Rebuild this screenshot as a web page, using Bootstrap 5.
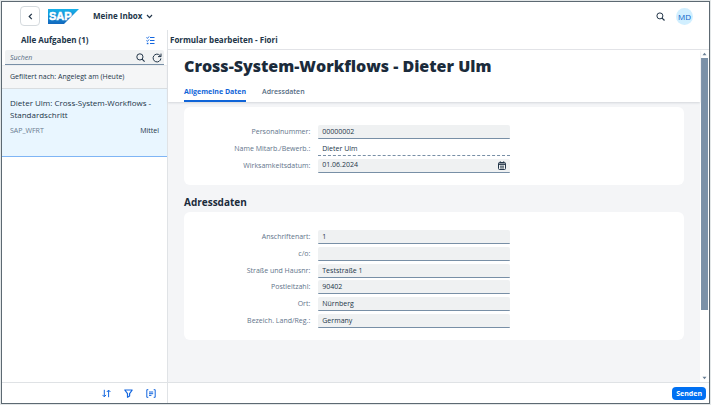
<!DOCTYPE html>
<html lang="de">
<head>
<meta charset="utf-8">
<meta name="viewport" content="width=device-width, initial-scale=1">
<title>Meine Inbox</title>
<link href="https://cdn.jsdelivr.net/npm/bootstrap@5.3.0/dist/css/bootstrap.min.css" rel="stylesheet">
<style>
body{font-family:"Open Sans","Noto Sans",sans-serif;font-size:7px;line-height:12px;color:#223548;background:#e3e7e8;padding:1px}
.app-frame{border:1px solid #5d6972;background:#fff}
.shell-bar{height:28px;padding:0 16px 0 18px}
.back-btn{width:20px;height:20px;border:1px solid #d5dade;border-radius:4px;background:#fff}
.icon-btn{border:0;background:none;padding:0;display:flex;color:#223548}
.icon-btn.blue{color:#1467df}
.shell-title{font-size:8px;font-weight:700;margin-left:14px}
.icon-btn.user-badge{width:17px;height:17px;background:#d1efff;color:#0f5fc9;font-size:8px;line-height:17px;margin-left:11px}
.master{width:166px;border-right:1px solid #e0e3e6}
.pane-title{font-size:8px;font-weight:700;line-height:19px;height:20px;margin:0}
.list-title{padding-left:19px}
.search-field{height:15px;margin:0 3px;background:#f0f2f3;border-bottom:1px solid #788fa6;border-radius:2px 2px 0 0;padding:1px 2px 0 5px;gap:7px}
.search-field input{background:none;border:0;padding:0;outline:0;min-width:0;font-style:italic;color:#556b82}
.search-field input::placeholder{color:#556b82;opacity:1}
.filter-info{height:24px;line-height:22px;padding-left:8px;background:#f5f6f7;border-top:1px solid #eceef0;border-bottom:1px solid #d9dde0}
.task-item{height:68px;background:#e9f6ff;border-bottom:1px solid #7fb5f5;padding:8px 8px 0;color:#223548;text-decoration:none}
.task-name{font-size:8px;line-height:12px}
.task-meta{margin-top:4px}
.task-code{color:#6a7c8f}
.foot{height:21px;border-top:1px solid #dfe2e5}
.foot-icons{gap:13px;padding-right:11px}
.detail-title{padding-left:2px;border-bottom:1px solid #e3e5e8}
.object-head{padding:5px 0 0 16px;box-shadow:0 1px 2px #d3d7db}
.object-head h1{font-size:16px;font-weight:800;line-height:22px;margin:0;color:#1b2b3b}
.tabs{gap:16px;margin-top:6px}
.tabs .nav-link{padding:0;font-size:7px;font-weight:600;line-height:17px;color:#556b82;border-bottom:2px solid transparent;border-radius:0}
.tabs .nav-link.active{font-weight:700;color:#0f64d8;border-bottom-color:#0f64d8}
.page-body{background:#f4f5f7;padding:5px 16px 0}
.form-card{background:#fff;border-radius:6px;padding:17px 0 11px}
.form-grid{display:grid;grid-auto-rows:1fr}
.rows-3{min-height:50px}
.rows-6{min-height:100px}
.form-line{display:grid;grid-template-columns:134fr 191fr 174fr;align-items:center}
.form-line label{text-align:right;padding-right:8px;color:#62748a}
.field{height:14px;font-size:7px;color:#223548;background:#eff1f2;border:0;border-bottom:1px solid #788fa6;border-radius:2px 2px 1px 1px;padding:0 4px;outline:0;min-width:0;width:100%}
.field.plain{background:none;border-bottom:1px dashed #788fa6;border-radius:0}
.date-field{display:flex;align-items:center}
.date-field input{background:none;border:0;padding:0;outline:0;color:inherit;min-width:0;flex:1}
.section-title{font-size:10px;font-weight:700;line-height:14px;margin:10px 0 3px;color:#1b2b3b}
.scroll-track{width:9px;background:#fff}
.scroll-track svg{margin:2px auto;display:block}
.thumb{background:#7b91a8;flex:252;margin:0 1px}
.rest{flex:64}
.send-btn{font-size:7px;font-weight:700;line-height:13px;padding:0 4px;margin-right:3px;border-radius:4px;background:#0070f2;border:0;color:#fff}
.send-btn:hover{background:#0064d9;color:#fff}
</style>
<script src="https://cdn.jsdelivr.net/npm/bootstrap@5.3.0/dist/js/bootstrap.bundle.min.js"></script>
</head>
<body class="vh-100 d-flex flex-column">
<div class="app-frame flex-grow-1 d-flex flex-column">
  <header class="shell-bar d-flex align-items-center">
    <button class="back-btn d-flex align-items-center justify-content-center p-0" type="button" aria-label="Zurück">
      <svg width="5" height="7" viewBox="0 0 5 7" fill="none" stroke="#223548" stroke-width="1.2"><path d="M3.8 .8 1.2 3.5 3.8 6.2"/></svg>
    </button>
    <svg class="ms-2" width="31" height="15" viewBox="0 0 31 15" role="img" aria-label="SAP">
      <defs><linearGradient id="sapBlue" x1="0" y1="0" x2="0" y2="1"><stop offset="0" stop-color="#18b2ea"/><stop offset="1" stop-color="#1267bd"/></linearGradient></defs>
      <path d="M0 0H31L16 15H0z" fill="url(#sapBlue)"/>
      <text x="1" y="11" font-family="Liberation Sans, sans-serif" font-weight="700" font-size="11" fill="#fff" stroke="#fff" stroke-width=".5">SAP</text>
    </svg>
    <button class="icon-btn shell-title align-items-center" type="button">Meine Inbox
      <svg class="ms-1" width="7" height="5" viewBox="0 0 7 5" fill="none" stroke="currentColor" stroke-width="1.2"><path d="M1 1 3.5 3.6 6 1"/></svg>
    </button>
    <button class="icon-btn ms-auto" type="button" aria-label="Suche">
      <svg width="9" height="9" viewBox="0 0 9 9" fill="none" stroke="currentColor"><circle cx="3.9" cy="3.9" r="3"/><path d="M6.1 6.1 8.5 8.5" stroke-width="1.2"/></svg>
    </button>
    <button class="icon-btn user-badge rounded-circle justify-content-center" type="button">MD</button>
  </header>
  <div class="d-flex flex-grow-1">
    <aside class="master d-flex flex-column flex-shrink-0">
      <div class="d-flex align-items-center">
        <h2 class="pane-title list-title flex-grow-1">Alle Aufgaben (1)</h2>
        <button class="icon-btn blue me-2 pe-1" type="button" aria-label="Mehrfachauswahl">
          <svg width="9" height="9" viewBox="0 0 9 9" fill="none" stroke="currentColor"><path d="M4 1.5H8.5M4 4.5H8.5M4 7.5H8.5M.5 1.5 1.4 2.4 3 .5M.5 4.5 1.4 5.4 3 3.5"/><path d="M.8 7.5H2.4" stroke-width="1.4"/></svg>
        </button>
      </div>
      <div class="search-field d-flex align-items-center">
        <input class="flex-grow-1" type="search" placeholder="Suchen" aria-label="Suchen">
        <button class="icon-btn" type="button" aria-label="Suchen"><svg width="9" height="9" viewBox="0 0 9 9" fill="none" stroke="currentColor"><circle cx="3.9" cy="3.9" r="3.1"/><path d="M6.1 6.1 8.6 8.6" stroke-width="1.1"/></svg></button>
        <button class="icon-btn" type="button" aria-label="Aktualisieren"><svg width="10" height="10" viewBox="0 0 10 10" fill="none" stroke="currentColor"><path d="M8.9 5.4A3.9 3.9 0 1 1 7.9 2.4L8.8 3.4M9 .6V3.6H6"/></svg></button>
      </div>
      <div class="filter-info">Gefiltert nach: Angelegt am (Heute)</div>
      <a class="task-item d-block" href="#">
        <div class="task-name">Dieter Ulm: Cross-System-Workflows - Standardschritt</div>
        <div class="task-meta d-flex justify-content-between"><span class="task-code">SAP_WFRT</span><span>Mittel</span></div>
      </a>
      <div class="flex-grow-1"></div>
      <div class="foot foot-icons d-flex align-items-center justify-content-end">
        <button class="icon-btn blue" type="button" aria-label="Sortieren"><svg width="9" height="9" viewBox="0 0 9 9" fill="none" stroke="currentColor"><path d="M2.3 .8V7.6M.5 5.9 2.3 7.8 4.1 5.9M6.6 8.2V1.2M4.8 3 6.6 1.1 8.4 3"/></svg></button>
        <button class="icon-btn blue" type="button" aria-label="Filtern"><svg width="9" height="9" viewBox="0 0 9 9" fill="none" stroke="currentColor" stroke-width="1.2" stroke-linejoin="round"><path d="M.8 1H8.2L5.6 4.7V7L3.5 8.3V4.7z"/></svg></button>
        <button class="icon-btn blue" type="button" aria-label="Gruppieren"><svg width="10" height="9" viewBox="0 0 10 9" fill="none" stroke="currentColor"><path d="M2.3 .7H.8V8.3H2.3M7.7 .7H9.2V8.3H7.7M3 3H7.2M3 4.7H7.2M3 6.4H5.4"/></svg></button>
      </div>
    </aside>
    <main class="d-flex flex-column flex-grow-1">
      <h2 class="pane-title detail-title">Formular bearbeiten - Fiori</h2>
      <div class="d-flex flex-grow-1">
        <div class="d-flex flex-column flex-grow-1">
          <div class="object-head position-relative">
            <h1>Cross-System-Workflows - Dieter Ulm</h1>
            <nav class="nav tabs">
              <a class="nav-link active" href="#allgemein">Allgemeine Daten</a>
              <a class="nav-link" href="#adressdaten">Adressdaten</a>
            </nav>
          </div>
          <form class="page-body flex-grow-1">
            <section class="form-card" id="allgemein">
              <div class="form-grid rows-3">
                <div class="form-line"><label for="pernr">Personalnummer:</label><input class="field" id="pernr" value="00000002"></div>
                <div class="form-line"><label for="ename">Name Mitarb./Bewerb.:</label><input class="field plain" id="ename" value="Dieter Ulm" readonly></div>
                <div class="form-line"><label for="begda">Wirksamkeitsdatum:</label>
                  <div class="field date-field"><input id="begda" value="01.06.2024">
                    <button class="icon-btn" type="button" aria-label="Kalender öffnen"><svg width="8" height="9" viewBox="0 0 8 9" fill="none" stroke="currentColor"><rect x=".5" y="1.5" width="7" height="7" rx="1"/><path d="M.5 3.2H7.5" stroke-width="1.4"/><path d="M2.3 .3V2M5.7 .3V2M2 5.2H6M2 6.9H6" stroke-width=".9"/></svg></button>
                  </div></div>
              </div>
            </section>
            <h2 class="section-title">Adressdaten</h2>
            <section class="form-card" id="adressdaten">
              <div class="form-grid rows-6">
                <div class="form-line"><label for="anssa">Anschriftenart:</label><input class="field" id="anssa" value="1"></div>
                <div class="form-line"><label for="careof">c/o:</label><input class="field" id="careof"></div>
                <div class="form-line"><label for="stras">Straße und Hausnr:</label><input class="field" id="stras" value="Teststraße 1"></div>
                <div class="form-line"><label for="pstlz">Postleitzahl:</label><input class="field" id="pstlz" value="90402"></div>
                <div class="form-line"><label for="ort">Ort:</label><input class="field" id="ort" value="Nürnberg"></div>
                <div class="form-line"><label for="land">Bezeich. Land/Reg.:</label><input class="field" id="land" value="Germany"></div>
              </div>
            </section>
          </form>
        </div>
        <div class="scroll-track d-flex flex-column flex-shrink-0">
          <svg width="5" height="4" viewBox="0 0 5 4" fill="#6a7f95"><path d="M.5 3.2 2.5 .8 4.5 3.2z"/></svg>
          <div class="thumb"></div>
          <div class="rest"></div>
          <svg width="5" height="4" viewBox="0 0 5 4" fill="#6a7f95"><path d="M.5 .8 2.5 3.2 4.5 .8z"/></svg>
        </div>
      </div>
      <footer class="foot d-flex align-items-center justify-content-end">
        <button class="btn send-btn" type="button">Senden</button>
      </footer>
    </main>
  </div>
</div>
</body>
</html>
